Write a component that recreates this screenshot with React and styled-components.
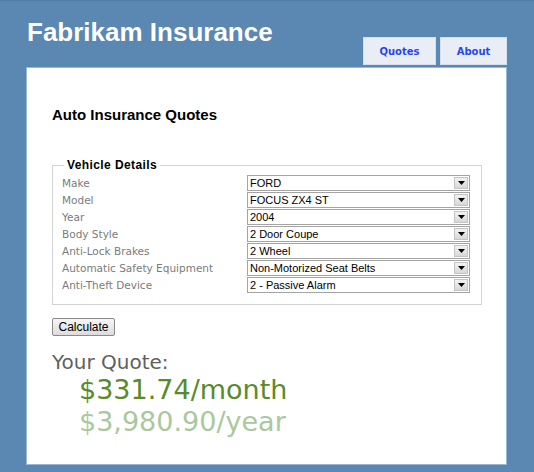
import React from 'react'
import styled, { createGlobalStyle } from 'styled-components'

const GlobalStyle = createGlobalStyle`
  html, body {
    margin: 0;
    padding: 0;
    background: #5b87b3;
  }
  body {
    font-family: "Liberation Sans", Arial, sans-serif;
  }
`

const vehicle = [
  { label: 'Make', value: 'FORD' },
  { label: 'Model', value: 'FOCUS ZX4 ST' },
  { label: 'Year', value: '2004' },
  { label: 'Body Style', value: '2 Door Coupe' },
  { label: 'Anti-Lock Brakes', value: '2 Wheel' },
  { label: 'Automatic Safety Equipment', value: 'Non-Motorized Seat Belts' },
  { label: 'Anti-Theft Device', value: '2 - Passive Alarm' },
]

function Dropdown({ value }) {
  return (
    <SelectBox>
      <span>{value}</span>
      <ArrowButton>
        <svg width='7' height='4' viewBox='0 0 7 4'>
          <path d='M0 0H7L3.5 4Z' fill='#000' />
        </svg>
      </ArrowButton>
    </SelectBox>
  )
}

export default function App() {
  return (
    <Page>
      <GlobalStyle />
      <Header>
        <Title>Fabrikam Insurance</Title>
        <Tabs>
          <Tab $width={73}>Quotes</Tab>
          <Tab $width={67}>About</Tab>
        </Tabs>
      </Header>
      <Panel>
        <Heading>Auto Insurance Quotes</Heading>
        <Fieldset>
          <Legend>Vehicle Details</Legend>
          <FormGrid>
            {vehicle.map((row) => (
              <React.Fragment key={row.label}>
                <Label>{row.label}</Label>
                <Dropdown value={row.value} />
              </React.Fragment>
            ))}
          </FormGrid>
        </Fieldset>
        <Button>Calculate</Button>
        <QuoteTitle>Your Quote:</QuoteTitle>
        <Amounts>
          <Amount $color='#5a8b2b'>$331.74/month</Amount>
          <Amount $color='#aac89c'>$3,980.90/year</Amount>
        </Amounts>
      </Panel>
    </Page>
  )
}

const Page = styled.div`
  width: 534px;
  height: 472px;
  border-top: 1px solid #4f7aa6;
  box-sizing: border-box;
`

const Header = styled.div`
  display: flex;
  justify-content: space-between;
  align-items: flex-end;
  height: 66px;
  padding: 0 27px 0 27px;
  box-sizing: border-box;
`

const Title = styled.h1`
  align-self: flex-start;
  margin: 16px 0 0;
  font-size: 26px;
  line-height: 30px;
  font-weight: bold;
  color: #fff;
`

const Tabs = styled.div`
  display: flex;
  gap: 4px;
  margin-bottom: 2px;
`

const Tab = styled.div`
  width: ${(p) => p.$width}px;
  height: 28px;
  box-sizing: border-box;
  display: flex;
  align-items: center;
  justify-content: center;
  background: #e9eef6;
  border: 1px solid #d5e0ec;
  font-family: "DejaVu Sans", Verdana, sans-serif;
  font-size: 10px;
  font-weight: bold;
  color: #2745f5;
`

const Panel = styled.div`
  margin: 0 27px 0 26px;
  height: 398px;
  box-sizing: border-box;
  background: #fff;
  border: 1px solid #9ab7d4;
  padding: 38px 24px 0 25px;
`

const Heading = styled.h2`
  margin: 0 0 34px;
  font-size: 15px;
  line-height: 18px;
  font-weight: bold;
  color: #000;
`

const Fieldset = styled.fieldset`
  margin: 0;
  padding: 3px 12px 11px 9px;
  border: 1px solid #d3d3d3;
  min-width: 0;
`

const Legend = styled.legend`
  margin-left: 2px;
  padding: 0 3px;
  font-size: 12px;
  font-weight: bold;
  letter-spacing: 0.4px;
  color: #000;
`

const FormGrid = styled.div`
  display: grid;
  grid-template-columns: 185px 223px;
  grid-auto-rows: 16px;
  row-gap: 1px;
  align-items: center;
`

const Label = styled.div`
  font-family: "DejaVu Sans", Verdana, sans-serif;
  font-size: 10.5px;
  line-height: 16px;
  color: #7b7b7b;
  white-space: nowrap;
`

const SelectBox = styled.div`
  display: flex;
  align-items: center;
  justify-content: space-between;
  height: 16px;
  box-sizing: border-box;
  border: 1px solid #a4a4a4;
  background: #fff;
  padding-left: 2px;
  font-size: 11px;
  color: #000;

  span {
    line-height: 14px;
  }
`

const ArrowButton = styled.div`
  width: 14px;
  height: 12px;
  margin-right: 1px;
  box-sizing: border-box;
  display: flex;
  align-items: center;
  justify-content: center;
  background: linear-gradient(#f2f2f2, #d8d8d8);
  border: 1px solid #c4c4c4;
`

const Button = styled.button`
  display: block;
  margin: 13px 0 0;
  width: 63px;
  height: 18px;
  padding: 0;
  font-family: "Liberation Sans", Arial, sans-serif;
  font-size: 12px;
  color: #000;
  background: linear-gradient(#f6f6f6, #dcdcdc);
  border: 1px solid #8a8a8a;
  border-radius: 2px;
`

const QuoteTitle = styled.div`
  margin-top: 14px;
  font-family: "DejaVu Sans", Verdana, sans-serif;
  font-size: 20px;
  line-height: 24px;
  color: #5f5f5f;
`

const Amounts = styled.div`
  padding-left: 27px;
`

const Amount = styled.div`
  font-family: "DejaVu Sans", Verdana, sans-serif;
  font-size: 27px;
  line-height: 32px;
  color: ${(p) => p.$color};
`
